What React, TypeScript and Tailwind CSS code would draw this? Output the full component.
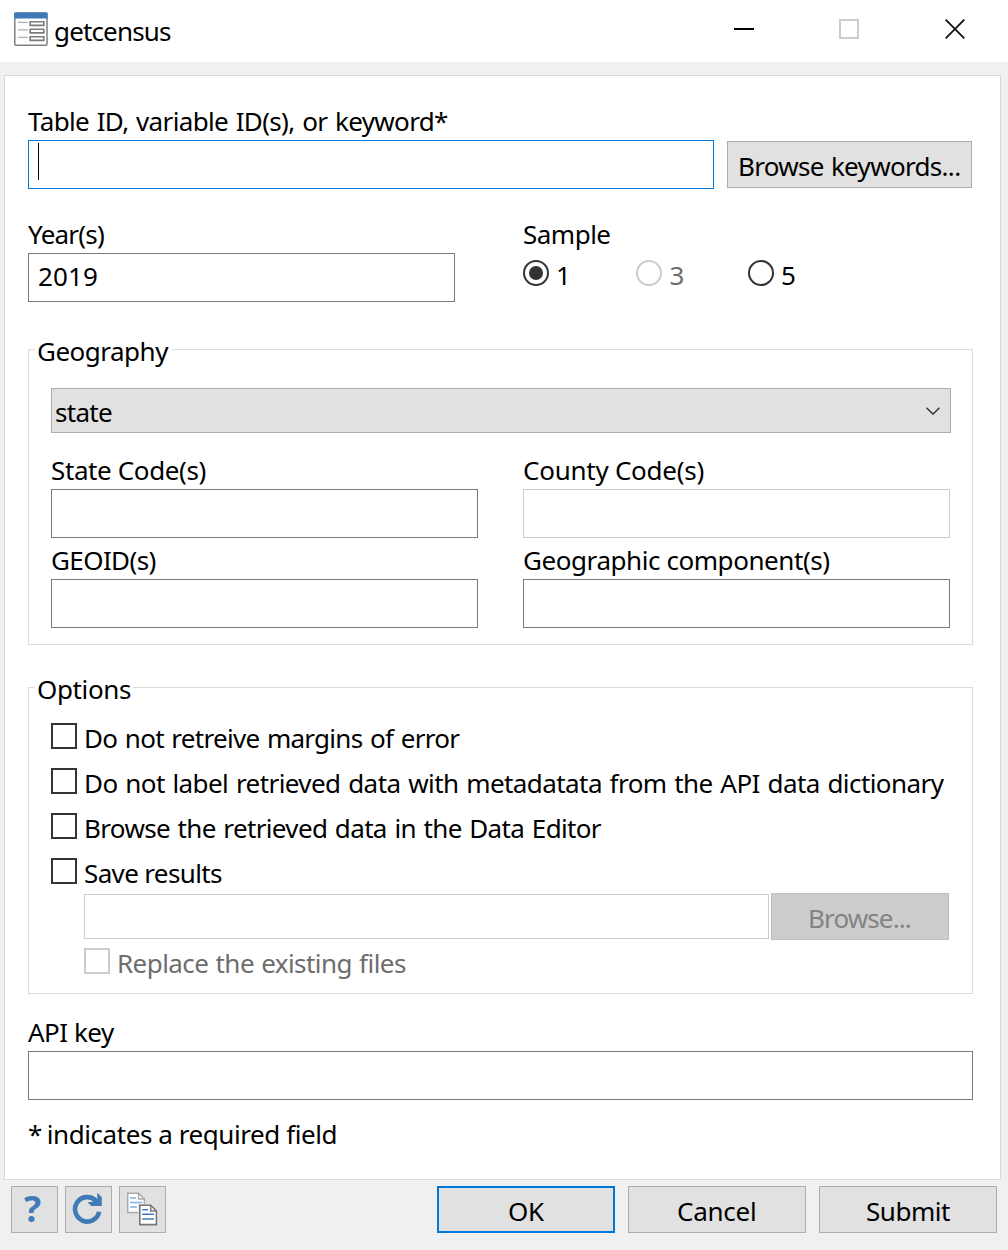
import type { ReactNode } from 'react';

function Label({ children, className = '' }: { children: ReactNode; className?: string }) {
  return <span className={`block h-9 leading-9 whitespace-nowrap ${className}`}>{children}</span>;
}

function Field({ className = '', children }: { className?: string; children?: ReactNode }) {
  return <div className={`border bg-white ${className}`}>{children}</div>;
}

function Group({ title, titleClass, className, children }: { title: string; titleClass: string; className: string; children: ReactNode }) {
  return (
    <section className={`relative w-[945px] border border-[#dcdcdc] ${className}`}>
      <Label className={`absolute left-1.5 -top-[17px] bg-white pl-0.5 ${titleClass}`}>{title}</Label>
      {children}
    </section>
  );
}

function Radio({ label, checked = false, disabled = false }: { label: string; checked?: boolean; disabled?: boolean }) {
  return (
    <div className="flex w-[112.5px] items-start">
      <span className={`mt-[3px] flex size-[26px] items-center justify-center rounded-full border-2 ${disabled ? 'border-[#cccccc]' : 'border-[#333333]'}`}>
        {checked && <span className="size-3.5 rounded-full bg-[#333333]" />}
      </span>
      <Label className={disabled ? 'ml-2 text-[#6d6d6d]' : 'ml-[7px]'}>{label}</Label>
    </div>
  );
}

function Check({ label, className = 'h-[45px]', disabled = false }: { label: string; className?: string; disabled?: boolean }) {
  return (
    <div className={`flex items-start ${className}`}>
      <span className={`mt-[3px] size-[26px] shrink-0 border-2 ${disabled ? 'border-[#cccccc]' : 'border-[#333333]'}`} />
      <Label className={disabled ? 'ml-[7px] text-[#6d6d6d]' : 'ml-[7px]'}>{label}</Label>
    </div>
  );
}

function Button({ label, className }: { label: string; className: string }) {
  return (
    <button type="button" className={`flex h-[47px] shrink-0 ${className}`}>
      <Label>{label}</Label>
    </button>
  );
}

function FormIcon() {
  return (
    <svg className="mt-3 ml-3.5 size-[34px]" viewBox="0 0 34 34" fill="none">
      <rect x="0.8" y="1" width="32.2" height="32.2" rx="1" fill="#fff" stroke="#7d8084" strokeWidth="1.5" />
      <path d="M0.3 1.2q0-.8.8-.8h31.6q.8 0 .8.8V6.5H.3z" fill="#3e7ab8" />
      <path d="M4 10.3h10M4 17.9h10M4 25.3h10" stroke="#b0b0b0" strokeWidth="1.3" />
      <path d="M16.2 9.7h13.6v3.7H16.2zM16.2 17.2h13.6v3.7H16.2zM16.2 24.7h13.6v3.7H16.2z" stroke="#7b7b7b" strokeWidth="1.6" />
    </svg>
  );
}

function RefreshIcon() {
  return (
    <svg className="size-[45px]" viewBox="1 1 45 45" fill="none">
      <path d="M31 14.8A12.2 12.2 0 1 0 34.2 25.8" stroke="#407ab7" strokeWidth="4.6" />
      <path d="M32.3 6.8L36.8 11.2V20H26.3L22.6 16.3L29 15.7L32.3 13z" fill="#407ab7" />
    </svg>
  );
}

function CopyIcon() {
  return (
    <svg className="size-[45px]" viewBox="1 1 45 45">
      <path d="M8.7 7.2H19.6L25.4 13V26.6H8.7z" fill="#fff" stroke="#a9a9a9" strokeWidth="1.5" />
      <path d="M19.6 7.2V13h5.8" fill="none" stroke="#a9a9a9" strokeWidth="1.4" />
      <path d="M11 12h6M11 16.4h12.3M11 21h7" stroke="#7ab2e5" strokeWidth="1.5" />
      <path d="M19.3 17.7h19.4V40H19.3z" fill="#e1e1e1" />
      <path d="M20.8 19.2H31.7L37.4 25V38.6H20.8z" fill="#fff" stroke="#777" strokeWidth="1.6" />
      <path d="M31.7 19.2V25h5.7" fill="none" stroke="#777" strokeWidth="1.5" />
      <path d="M23.2 23.8H29M23.2 28.3H35M23.2 33H35" stroke="#407ab7" strokeWidth="1.6" />
    </svg>
  );
}

const toolButton = 'flex size-[47px] items-center justify-center border border-[#adadad] bg-[#e1e1e1]';

export default function App() {
  return (
    <div className="flex h-[1250px] w-[1008px] flex-col overflow-hidden bg-[#f0f0f0] font-['Noto_Sans','Open_Sans',sans-serif] text-[26px] tracking-[-0.45px] text-black">
      <header className="flex h-[62px] shrink-0 bg-white">
        <FormIcon />
        <Label className="mt-[13px] ml-1.5 tracking-[-0.85px]">getcensus</Label>
        <div className="mt-[19px] ml-auto flex h-5">
          <svg className="h-5 w-5" viewBox="0 0 20 20"><path d="M0 10h20" stroke="#000" strokeWidth="2" /></svg>
          <span className="ml-[85px] size-5 border-2 border-[#cccccc]" />
          <svg className="mr-[43px] ml-[86px] h-5 w-5" viewBox="0 0 20 20"><path d="M0.7 0.7L19.3 19.3M19.3 0.7L0.7 19.3" stroke="#111" strokeWidth="1.8" /></svg>
        </div>
      </header>

      <main className="mt-[13px] ml-1 h-[1105px] w-[997px] shrink-0 border border-[#d9d9d9] bg-white pt-[27px] pl-[23px]">
        <Label className="tracking-[-0.65px] [word-spacing:1.5px]">Table ID, variable ID(s), or keyword*</Label>
        <div className="mt-px flex items-start">
          <Field className="h-[49px] w-[686px] border-[#0078d7] pt-0.5 pl-[9px]">
            <span className="block h-[37px] w-px bg-black" />
          </Field>
          <Button label="Browse keywords..." className="mt-px ml-[13px] w-[245px] border border-[#adadad] bg-[#e1e1e1] pt-1.5 pl-2.5 tracking-[-0.68px] [word-spacing:1px]" />
        </div>

        <div className="mt-[27px] flex">
          <div className="w-[495px]">
            <Label className="tracking-[-0.78px]">Year(s)</Label>
            <Field className="mt-px h-[49px] w-[427px] border-[#7a7a7a] pt-1 pl-[9px] tracking-[0.1px]"><Label>2019</Label></Field>
          </div>
          <div>
            <Label className="tracking-[-0.5px]">Sample</Label>
            <div className="mt-[5px] flex">
              <Radio label="1" checked />
              <Radio label="3" disabled />
              <Radio label="5" />
            </div>
          </div>
        </div>

        <Group title="Geography" titleClass="w-[137px] tracking-[-0.5px]" className="mt-[47px] h-[296px] pt-[38px] pl-[22px]">
          <div className="flex h-[45px] w-[900px] items-start justify-between border border-[#adadad] bg-[#e1e1e1] pt-[5px] pl-[3px]">
            <Label className="tracking-[-0.7px]">state</Label>
            <svg className="mt-[13px] mr-2.5 h-2 w-3.5" viewBox="0 0 14 8" fill="none"><path d="M0.5 0.7L7 7.1L13.5 0.7" stroke="#333" strokeWidth="1.4" /></svg>
          </div>
          <div className="mt-[19px] grid grid-cols-[472px_427px] gap-y-1">
            <div>
              <Label className="tracking-[-0.38px]">State Code(s)</Label>
              <Field className="mt-px h-[49px] w-[427px] border-[#7a7a7a]" />
            </div>
            <div>
              <Label className="tracking-[-0.26px]">County Code(s)</Label>
              <Field className="mt-px h-[49px] w-[427px] border-[#cccccc]" />
            </div>
            <div>
              <Label className="tracking-[-0.6px]">GEOID(s)</Label>
              <Field className="mt-px h-[49px] w-[427px] border-[#7a7a7a]" />
            </div>
            <div>
              <Label className="tracking-[-0.43px]">Geographic component(s)</Label>
              <Field className="mt-px h-[49px] w-[427px] border-[#7a7a7a]" />
            </div>
          </div>
        </Group>

        <Group title="Options" titleClass="w-[98px] tracking-[-0.36px]" className="mt-[42px] h-[307px] pt-8 pl-[22px]">
          <Check label="Do not retreive margins of error" className="h-[45px] tracking-[-0.72px] [word-spacing:1.5px]" />
          <Check label="Do not label retrieved data with metadatata from the API data dictionary" className="h-[45px] tracking-[-0.57px] [word-spacing:1.5px]" />
          <Check label="Browse the retrieved data in the Data Editor" className="h-[45px] tracking-[-0.65px] [word-spacing:1.5px]" />
          <Check label="Save results" className="h-[38px] tracking-[-0.64px]" />
          <div className="flex items-start pl-[33px]">
            <Field className="mt-px h-[45px] w-[685px] border-[#cccccc]" />
            <Button label="Browse..." className="ml-0.5 w-[178px] border border-[#bfbfbf] bg-[#cccccc] pt-1.5 pl-9 tracking-[-0.87px] text-[#838383]" />
          </div>
          <Check label="Replace the existing files" disabled className="mt-[5px] ml-[33px] h-9 tracking-[-0.56px] [word-spacing:1px]" />
        </Group>

        <Label className="mt-5 tracking-[-0.5px]">API key</Label>
        <Field className="mt-px h-[49px] w-[945px] border-[#7a7a7a]" />
        <Label className="mt-4 tracking-[-0.43px]"><span className="mr-[-1.5px]">*</span> indicates a required field</Label>
      </main>

      <footer className="mt-1.5 flex shrink-0 pl-[11px]">
        <div className="flex gap-[7px]">
          <button type="button" className={toolButton}>
            <span className="-mt-0.5 -ml-1 font-['Open_Sans'] text-[36px] leading-none font-bold tracking-normal text-[#407ab7]">?</span>
          </button>
          <button type="button" className={toolButton}><RefreshIcon /></button>
          <button type="button" className={toolButton}><CopyIcon /></button>
        </div>
        <div className="ml-[271px] flex gap-[13px]">
          <Button label="OK" className="w-[178px] border-2 border-[#0078d7] bg-[#e1e1e1] pt-[5px] pl-[69px] tracking-[-0.3px]" />
          <Button label="Cancel" className="w-[178px] border border-[#adadad] bg-[#e1e1e1] pt-1.5 pl-12 tracking-[-0.25px]" />
          <Button label="Submit" className="w-[178px] border border-[#adadad] bg-[#e1e1e1] pt-1.5 pl-[46px] tracking-[-0.45px]" />
        </div>
      </footer>
    </div>
  );
}
